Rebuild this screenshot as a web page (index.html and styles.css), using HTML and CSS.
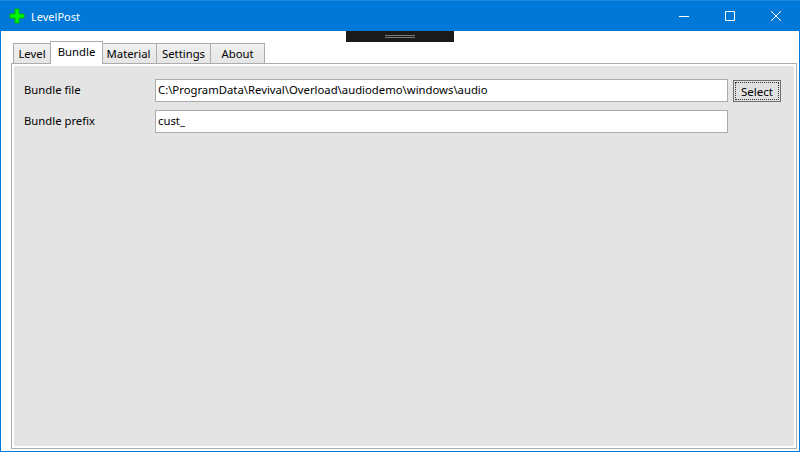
FILE: index.html
```html
<!DOCTYPE html>
<html lang="en">

<head>
  <meta charset="UTF-8">
  <title>LevelPost</title>
  <link rel="stylesheet" href="styles.css">
</head>

<body>
  <div class="window">
    <header class="titlebar">
      <svg class="app_icon" width="16" height="16" viewBox="0 0 16 16">
        <path d="M6 1h4v5h5v4h-5v5h-4v-5h-5v-4h5z" fill="#00f800" stroke="#00b400" />
      </svg>
      <span class="app_title">LevelPost</span>
      <div class="controls">
        <button class="control">
          <svg width="10" height="10" viewBox="0 0 10 10"><path d="M0 5.5h10" stroke="#fff" /></svg>
        </button>
        <button class="control">
          <svg width="10" height="10" viewBox="0 0 10 10"><path d="M.5 .5h9v9h-9z" fill="none" stroke="#fff" /></svg>
        </button>
        <button class="control">
          <svg width="10" height="10" viewBox="0 0 10 10"><path d="M0 0l10 10M10 0l-10 10" stroke="#fff" /></svg>
        </button>
      </div>
    </header>

    <div class="debug_handle">
      <span></span>
    </div>

    <div class="content">
      <nav class="tabs">
        <div class="tab">Level</div>
        <div class="tab tab_active">Bundle</div>
        <div class="tab tab_material">Material</div>
        <div class="tab">Settings</div>
        <div class="tab">About</div>
      </nav>
      <main class="panel">
        <div class="row">
          <label class="row_label">Bundle file</label>
          <div class="field">C:\ProgramData\Revival\Overload\audiodemo\windows\audio</div>
          <button class="select_btn"><span>Select</span></button>
        </div>
        <div class="row">
          <label class="row_label">Bundle prefix</label>
          <div class="field">cust_</div>
        </div>
      </main>
    </div>
  </div>
</body>

</html>
```

FILE: styles.css
```css
* {
  margin: 0;
  box-sizing: border-box;
}

html,
body {
  height: 100%;
  overflow: hidden;
}

body {
  font-family: "Noto Sans", "Open Sans", sans-serif;
  font-size: 11.3px;
  color: #000;
  background: #fff;
}

.window {
  position: relative;
  display: flex;
  flex-direction: column;
  height: 452px;
  border: 1px solid #0078d7;
  border-top: 0;
}

.titlebar {
  display: flex;
  align-items: center;
  height: 31px;
  margin: 0 -1px;
  padding-left: 9px;
  background: #0078d7;
  border-top: 1px solid #1a86dc;
  color: #fff;
}

.app_icon {
  flex: none;
}

.app_title {
  margin-left: 6px;
  font-size: 11px;
}

.controls {
  display: flex;
  margin-left: auto;
  padding-right: 1px;
}

.control {
  display: flex;
  align-items: center;
  justify-content: center;
  width: 46px;
  height: 30px;
  padding: 0;
  background: none;
  border: 0;
}

.debug_handle {
  position: absolute;
  top: 31px;
  left: 345px;
  display: flex;
  align-items: center;
  justify-content: center;
  width: 108px;
  height: 11px;
  background: #1a1a1a;
}

.debug_handle span {
  width: 30px;
  height: 3px;
  border-top: 1px solid #7a7a7a;
  border-bottom: 1px solid #7a7a7a;
}

.content {
  flex: 1;
  display: flex;
  flex-direction: column;
  padding: 10px 2px 2px 10px;
}

.tabs {
  display: flex;
  align-items: flex-end;
  height: 22px;
  padding-left: 2px;
}

.tab {
  display: flex;
  align-items: center;
  justify-content: center;
  width: 55px;
  height: 20px;
  background: linear-gradient(#f0f0f0, #e5e5e5);
  border: 1px solid #acacac;
  border-bottom: 0;
  margin-left: -1px;
}

.tab:first-child {
  width: 38px;
  margin-left: 0;
}

.tab_material {
  padding-right: 2px;
}

.tab_active {
  position: relative;
  width: 53px;
  height: 23px;
  margin-bottom: -1px;
  padding-bottom: 3px;
  background: #fff;
  z-index: 1;
}

.panel {
  flex: 1;
  display: flex;
  flex-direction: column;
  gap: 8px;
  padding: 15px 12px 0;
  background: #e4e4e4;
  border: 1px solid #acacac;
  box-shadow: inset 0 0 0 2px #fff;
}

.row {
  display: flex;
  align-items: center;
  height: 23px;
}

.row_label {
  flex: none;
  width: 131px;
  padding-bottom: 2px;
}

.field {
  flex: none;
  width: 573px;
  height: 23px;
  padding: 1px 2px;
  line-height: 17px;
  background: #fff;
  border: 1px solid #ababab;
}

.select_btn {
  align-self: flex-end;
  width: 48px;
  height: 22px;
  margin-left: 5px;
  padding: 1px;
  font: inherit;
  font-size: 11.5px;
  color: #000;
  background: #e1e1e1;
  border: 1px solid #707070;
}

.select_btn span {
  display: block;
  height: 100%;
  line-height: 17px;
  border: 1px dotted #333;
}
```
